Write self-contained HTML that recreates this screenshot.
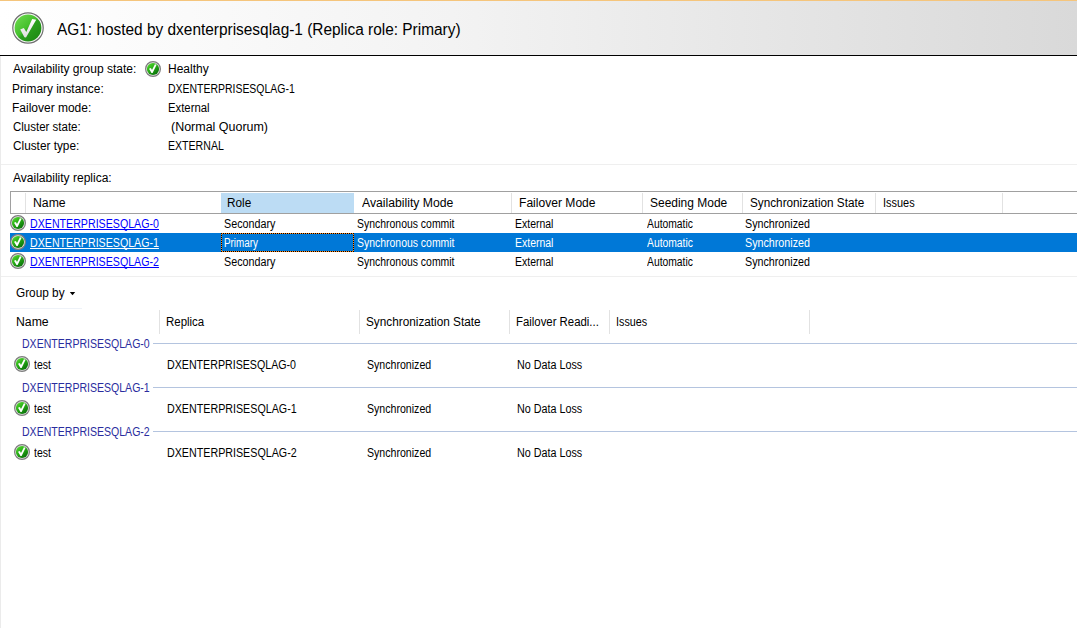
<!DOCTYPE html><html><head><meta charset="utf-8"><style>

html,body{margin:0;padding:0;width:1077px;height:628px;overflow:hidden;background:#fff;}
body{position:relative;font-family:"Liberation Sans",sans-serif;color:#000;}
.a{position:absolute;white-space:nowrap;}
.t{transform-origin:0 0;}
.lnk{color:#0000ff;text-decoration:underline;text-decoration-skip-ink:none;}
.lnk.sel{color:#fff;}
.sel{color:#fff;}
.grp{color:#2a2d9e;}
.b{position:absolute;}
body.measure .b, body.measure svg{display:none;}
body.measure .t{color:#000 !important;text-decoration:none !important;}

</style></head><body>
<div class="b" style="left:0;top:0;width:1077px;height:1px;background:#f5c57c"></div>
<div class="b" style="left:0;top:1px;width:1077px;height:54px;background:linear-gradient(to right,#ffffff 0%,#f3f3f3 42%,#d9d9d9 100%)"></div>
<div class="b" style="left:0;top:55px;width:1077px;height:1px;background:#000"></div>
<div class="b" style="left:0;top:56px;width:1px;height:572px;background:#ebebeb"></div>
<div class="b" style="left:1px;top:164px;width:1076px;height:1px;background:#efefef"></div>
<div class="b" style="left:10px;top:191px;width:1067px;height:1px;background:#a0a0a0"></div>
<div class="b" style="left:10px;top:191px;width:1px;height:22px;background:#a0a0a0"></div>
<div class="b" style="left:10px;top:213px;width:1067px;height:1px;background:#a0a0a0"></div>
<div class="b" style="left:221px;top:193px;width:133px;height:20px;background:#bcdcf4"></div>
<div class="b" style="left:25px;top:193px;width:1px;height:20px;background:#e2e2e2"></div>
<div class="b" style="left:511px;top:193px;width:1px;height:20px;background:#e2e2e2"></div>
<div class="b" style="left:642px;top:193px;width:1px;height:20px;background:#e2e2e2"></div>
<div class="b" style="left:742px;top:193px;width:1px;height:20px;background:#e2e2e2"></div>
<div class="b" style="left:875px;top:193px;width:1px;height:20px;background:#e2e2e2"></div>
<div class="b" style="left:1002px;top:193px;width:1px;height:20px;background:#e2e2e2"></div>
<div class="b" style="left:10px;top:233px;width:1067px;height:19px;background:#0078d7"></div>
<div class="b" style="left:221px;top:233px;width:133px;height:1px;background:repeating-linear-gradient(to right,#000 0 1px,#ff8a1e 1px 2px)"></div>
<div class="b" style="left:221px;top:251px;width:133px;height:1px;background:repeating-linear-gradient(to right,#000 0 1px,#ff8a1e 1px 2px)"></div>
<div class="b" style="left:221px;top:233px;width:1px;height:19px;background:repeating-linear-gradient(to bottom,#000 0 1px,#ff8a1e 1px 2px)"></div>
<div class="b" style="left:353px;top:233px;width:1px;height:19px;background:repeating-linear-gradient(to bottom,#000 0 1px,#ff8a1e 1px 2px)"></div>
<div class="b" style="left:1px;top:276px;width:1076px;height:1px;background:#efefef"></div>
<svg class="b" style="left:69px;top:292px" width="7" height="4" viewBox="0 0 7 4"><path d="M0.8 0 H6.2 L3.5 3.2 Z" fill="#000"/></svg>
<div class="b" style="left:10px;top:308px;width:72px;height:1px;background:#eef2f8"></div>
<div class="b" style="left:159px;top:310px;width:1px;height:24px;background:#e2e2e2"></div>
<div class="b" style="left:359px;top:310px;width:1px;height:24px;background:#e2e2e2"></div>
<div class="b" style="left:509px;top:310px;width:1px;height:24px;background:#e2e2e2"></div>
<div class="b" style="left:609px;top:310px;width:1px;height:24px;background:#e2e2e2"></div>
<div class="b" style="left:809px;top:310px;width:1px;height:24px;background:#e2e2e2"></div>
<div class="b" style="left:153px;top:343px;width:924px;height:1px;background:#b4c4df"></div>
<div class="b" style="left:153px;top:387px;width:924px;height:1px;background:#b4c4df"></div>
<div class="b" style="left:153px;top:431px;width:924px;height:1px;background:#b4c4df"></div>
<svg class="a" style="left:12px;top:12px" width="32" height="32" viewBox="0 0 32 32">
<defs><linearGradient id="gbb" x1="0" y1="0" x2="1" y2="1"><stop offset="0" stop-color="#72de52"/><stop offset="0.46" stop-color="#45c02d"/><stop offset="0.54" stop-color="#2a9f1c"/><stop offset="1" stop-color="#1b8412"/></linearGradient></defs>
<circle cx="16" cy="16" r="15.2" fill="#fafafa" stroke="#6e6e6e" stroke-width="1.2"/>
<circle cx="16" cy="16" r="13.4" fill="url(#gbb)"/>
<defs><linearGradient id="ckb" x1="0" y1="0" x2="0" y2="1"><stop offset="0" stop-color="#ffffff"/><stop offset="1" stop-color="#dedede"/></linearGradient></defs><path d="M8.2 17.6 L11.8 16.0 L14.3 20.0 L20.2 6.9 L24.2 7.7 L14.0 25.4 L12.4 25.2 Z" fill="url(#ckb)"/>
</svg>
<svg class="a" style="left:145px;top:61px" width="16" height="16" viewBox="0 0 16 16">
<defs><linearGradient id="gsh" x1="0.2" y1="0.1" x2="0.8" y2="0.9"><stop offset="0" stop-color="#4cd22a"/><stop offset="0.5" stop-color="#23a514"/><stop offset="1" stop-color="#0b740b"/></linearGradient></defs>
<circle cx="8" cy="8" r="7.4" fill="#e6e6e6" stroke="#7d7d7d" stroke-width="1.2"/>
<circle cx="8" cy="8" r="6.1" fill="url(#gsh)"/>
<path d="M4.0 7.7 L5.9 7.0 L7.0 8.9 L9.9 3.3 L11.6 3.8 L7.6 11.9 L6.5 12.0 Z" fill="#fff"/>
</svg>
<svg class="a" style="left:10px;top:215px" width="16" height="16" viewBox="0 0 16 16">
<defs><linearGradient id="gsr0" x1="0.2" y1="0.1" x2="0.8" y2="0.9"><stop offset="0" stop-color="#4cd22a"/><stop offset="0.5" stop-color="#23a514"/><stop offset="1" stop-color="#0b740b"/></linearGradient></defs>
<circle cx="8" cy="8" r="7.4" fill="#e6e6e6" stroke="#7d7d7d" stroke-width="1.2"/>
<circle cx="8" cy="8" r="6.1" fill="url(#gsr0)"/>
<path d="M4.0 7.7 L5.9 7.0 L7.0 8.9 L9.9 3.3 L11.6 3.8 L7.6 11.9 L6.5 12.0 Z" fill="#fff"/>
</svg>
<svg class="a" style="left:10px;top:234px" width="16" height="16" viewBox="0 0 16 16">
<defs><linearGradient id="gsr1" x1="0.2" y1="0.1" x2="0.8" y2="0.9"><stop offset="0" stop-color="#4cd22a"/><stop offset="0.5" stop-color="#23a514"/><stop offset="1" stop-color="#0b740b"/></linearGradient></defs>
<circle cx="8" cy="8" r="7.4" fill="#e6e6e6" stroke="#7d7d7d" stroke-width="1.2"/>
<circle cx="8" cy="8" r="6.1" fill="url(#gsr1)"/>
<path d="M4.0 7.7 L5.9 7.0 L7.0 8.9 L9.9 3.3 L11.6 3.8 L7.6 11.9 L6.5 12.0 Z" fill="#fff"/>
</svg>
<svg class="a" style="left:10px;top:253px" width="16" height="16" viewBox="0 0 16 16">
<defs><linearGradient id="gsr2" x1="0.2" y1="0.1" x2="0.8" y2="0.9"><stop offset="0" stop-color="#4cd22a"/><stop offset="0.5" stop-color="#23a514"/><stop offset="1" stop-color="#0b740b"/></linearGradient></defs>
<circle cx="8" cy="8" r="7.4" fill="#e6e6e6" stroke="#7d7d7d" stroke-width="1.2"/>
<circle cx="8" cy="8" r="6.1" fill="url(#gsr2)"/>
<path d="M4.0 7.7 L5.9 7.0 L7.0 8.9 L9.9 3.3 L11.6 3.8 L7.6 11.9 L6.5 12.0 Z" fill="#fff"/>
</svg>
<svg class="a" style="left:14px;top:356px" width="16" height="16" viewBox="0 0 16 16">
<defs><linearGradient id="gsg0" x1="0.2" y1="0.1" x2="0.8" y2="0.9"><stop offset="0" stop-color="#4cd22a"/><stop offset="0.5" stop-color="#23a514"/><stop offset="1" stop-color="#0b740b"/></linearGradient></defs>
<circle cx="8" cy="8" r="7.4" fill="#e6e6e6" stroke="#7d7d7d" stroke-width="1.2"/>
<circle cx="8" cy="8" r="6.1" fill="url(#gsg0)"/>
<path d="M4.0 7.7 L5.9 7.0 L7.0 8.9 L9.9 3.3 L11.6 3.8 L7.6 11.9 L6.5 12.0 Z" fill="#fff"/>
</svg>
<svg class="a" style="left:14px;top:400px" width="16" height="16" viewBox="0 0 16 16">
<defs><linearGradient id="gsg1" x1="0.2" y1="0.1" x2="0.8" y2="0.9"><stop offset="0" stop-color="#4cd22a"/><stop offset="0.5" stop-color="#23a514"/><stop offset="1" stop-color="#0b740b"/></linearGradient></defs>
<circle cx="8" cy="8" r="7.4" fill="#e6e6e6" stroke="#7d7d7d" stroke-width="1.2"/>
<circle cx="8" cy="8" r="6.1" fill="url(#gsg1)"/>
<path d="M4.0 7.7 L5.9 7.0 L7.0 8.9 L9.9 3.3 L11.6 3.8 L7.6 11.9 L6.5 12.0 Z" fill="#fff"/>
</svg>
<svg class="a" style="left:14px;top:444px" width="16" height="16" viewBox="0 0 16 16">
<defs><linearGradient id="gsg2" x1="0.2" y1="0.1" x2="0.8" y2="0.9"><stop offset="0" stop-color="#4cd22a"/><stop offset="0.5" stop-color="#23a514"/><stop offset="1" stop-color="#0b740b"/></linearGradient></defs>
<circle cx="8" cy="8" r="7.4" fill="#e6e6e6" stroke="#7d7d7d" stroke-width="1.2"/>
<circle cx="8" cy="8" r="6.1" fill="url(#gsg2)"/>
<path d="M4.0 7.7 L5.9 7.0 L7.0 8.9 L9.9 3.3 L11.6 3.8 L7.6 11.9 L6.5 12.0 Z" fill="#fff"/>
</svg>
<div id="title" class="a t " style="left:56.90px;top:22.00px;font-size:16px;line-height:16px;transform:scaleX(0.9634)">AG1: hosted by dxenterprisesqlag-1 (Replica role: Primary)</div>
<div id="il0" class="a t " style="left:13.10px;top:63.00px;font-size:12px;line-height:12px;transform:scaleX(1.0009)">Availability group state:</div>
<div id="iv0" class="a t " style="left:167.80px;top:63.00px;font-size:12px;line-height:12px;transform:scaleX(1.0008)">Healthy</div>
<div id="il1" class="a t " style="left:11.90px;top:83.00px;font-size:12px;line-height:12px;transform:scaleX(0.9891)">Primary instance:</div>
<div id="iv1" class="a t " style="left:167.80px;top:83.00px;font-size:12px;line-height:12px;transform:scaleX(0.8716)">DXENTERPRISESQLAG-1</div>
<div id="il2" class="a t " style="left:12.18px;top:102.00px;font-size:12px;line-height:12px;transform:scaleX(0.9990)">Failover mode:</div>
<div id="iv2" class="a t " style="left:168.01px;top:102.00px;font-size:12px;line-height:12px;transform:scaleX(0.9439)">External</div>
<div id="il3" class="a t " style="left:12.90px;top:121.00px;font-size:12px;line-height:12px;transform:scaleX(0.9569)">Cluster state:</div>
<div id="iv3" class="a t " style="left:170.66px;top:121.00px;font-size:12px;line-height:12px;transform:scaleX(1.0393)">(Normal Quorum)</div>
<div id="il4" class="a t " style="left:13.18px;top:140.00px;font-size:12px;line-height:12px;transform:scaleX(0.9837)">Cluster type:</div>
<div id="iv4" class="a t " style="left:168.00px;top:140.00px;font-size:12px;line-height:12px;transform:scaleX(0.8813)">EXTERNAL</div>
<div id="avr" class="a t " style="left:13.04px;top:172.00px;font-size:12px;line-height:12px;transform:scaleX(1.0022)">Availability replica:</div>
<div id="gh0" class="a t " style="left:33.03px;top:197.00px;font-size:12px;line-height:12px;transform:scaleX(1.0212)">Name</div>
<div id="gh1" class="a t " style="left:227.00px;top:197.00px;font-size:12px;line-height:12px;transform:scaleX(0.9810)">Role</div>
<div id="gh2" class="a t " style="left:361.96px;top:197.00px;font-size:12px;line-height:12px;transform:scaleX(1.0172)">Availability Mode</div>
<div id="gh3" class="a t " style="left:518.60px;top:197.00px;font-size:12px;line-height:12px;transform:scaleX(1.0069)">Failover Mode</div>
<div id="gh4" class="a t " style="left:649.69px;top:197.00px;font-size:12px;line-height:12px;transform:scaleX(0.9976)">Seeding Mode</div>
<div id="gh5" class="a t " style="left:749.80px;top:197.00px;font-size:12px;line-height:12px;transform:scaleX(0.9786)">Synchronization State</div>
<div id="gh6" class="a t " style="left:882.60px;top:197.00px;font-size:12px;line-height:12px;transform:scaleX(0.9135)">Issues</div>
<div id="gn0" class="a t lnk" style="left:30.00px;top:218.00px;font-size:12px;line-height:12px;transform:scaleX(0.8870)">DXENTERPRISESQLAG-0</div>
<div id="gr0" class="a t " style="left:223.69px;top:218.00px;font-size:12px;line-height:12px;transform:scaleX(0.8951)">Secondary</div>
<div id="ga0" class="a t " style="left:356.69px;top:218.00px;font-size:12px;line-height:12px;transform:scaleX(0.8704)">Synchronous commit</div>
<div id="gf0" class="a t " style="left:514.80px;top:218.00px;font-size:12px;line-height:12px;transform:scaleX(0.8724)">External</div>
<div id="gs0" class="a t " style="left:646.66px;top:218.00px;font-size:12px;line-height:12px;transform:scaleX(0.8612)">Automatic</div>
<div id="gy0" class="a t " style="left:745.26px;top:218.00px;font-size:12px;line-height:12px;transform:scaleX(0.8932)">Synchronized</div>
<div id="gn1" class="a t lnk sel" style="left:30.00px;top:237.00px;font-size:12px;line-height:12px;transform:scaleX(0.8870)">DXENTERPRISESQLAG-1</div>
<div id="gr1" class="a t  sel" style="left:223.76px;top:237.00px;font-size:12px;line-height:12px;transform:scaleX(0.8211)">Primary</div>
<div id="ga1" class="a t  sel" style="left:356.69px;top:237.00px;font-size:12px;line-height:12px;transform:scaleX(0.8704)">Synchronous commit</div>
<div id="gf1" class="a t  sel" style="left:514.80px;top:237.00px;font-size:12px;line-height:12px;transform:scaleX(0.8724)">External</div>
<div id="gs1" class="a t  sel" style="left:646.66px;top:237.00px;font-size:12px;line-height:12px;transform:scaleX(0.8612)">Automatic</div>
<div id="gy1" class="a t  sel" style="left:745.26px;top:237.00px;font-size:12px;line-height:12px;transform:scaleX(0.8932)">Synchronized</div>
<div id="gn2" class="a t lnk" style="left:30.00px;top:256.00px;font-size:12px;line-height:12px;transform:scaleX(0.8870)">DXENTERPRISESQLAG-2</div>
<div id="gr2" class="a t " style="left:223.69px;top:256.00px;font-size:12px;line-height:12px;transform:scaleX(0.8951)">Secondary</div>
<div id="ga2" class="a t " style="left:356.69px;top:256.00px;font-size:12px;line-height:12px;transform:scaleX(0.8704)">Synchronous commit</div>
<div id="gf2" class="a t " style="left:514.80px;top:256.00px;font-size:12px;line-height:12px;transform:scaleX(0.8724)">External</div>
<div id="gs2" class="a t " style="left:646.66px;top:256.00px;font-size:12px;line-height:12px;transform:scaleX(0.8612)">Automatic</div>
<div id="gy2" class="a t " style="left:745.26px;top:256.00px;font-size:12px;line-height:12px;transform:scaleX(0.8932)">Synchronized</div>
<div id="grpby" class="a t " style="left:16.03px;top:287.00px;font-size:12px;line-height:12px;transform:scaleX(0.9843)">Group by</div>
<div id="lh0" class="a t " style="left:15.66px;top:316.00px;font-size:12px;line-height:12px;transform:scaleX(1.0212)">Name</div>
<div id="lh1" class="a t " style="left:165.69px;top:316.00px;font-size:12px;line-height:12px;transform:scaleX(0.9547)">Replica</div>
<div id="lh2" class="a t " style="left:365.74px;top:316.00px;font-size:12px;line-height:12px;transform:scaleX(0.9820)">Synchronization State</div>
<div id="lh3" class="a t " style="left:515.60px;top:316.00px;font-size:12px;line-height:12px;transform:scaleX(0.9479)">Failover Readi...</div>
<div id="lh4" class="a t " style="left:615.80px;top:316.00px;font-size:12px;line-height:12px;transform:scaleX(0.8985)">Issues</div>
<div id="gg0" class="a t grp" style="left:21.80px;top:338.00px;font-size:12px;line-height:12px;transform:scaleX(0.8786)">DXENTERPRISESQLAG-0</div>
<div id="gt0" class="a t " style="left:34.20px;top:359.00px;font-size:12px;line-height:12px;transform:scaleX(0.8752)">test</div>
<div id="gp0" class="a t " style="left:166.96px;top:359.00px;font-size:12px;line-height:12px;transform:scaleX(0.8876)">DXENTERPRISESQLAG-0</div>
<div id="gz0" class="a t " style="left:367.00px;top:359.00px;font-size:12px;line-height:12px;transform:scaleX(0.8824)">Synchronized</div>
<div id="gd0" class="a t " style="left:516.60px;top:359.00px;font-size:12px;line-height:12px;transform:scaleX(0.8960)">No Data Loss</div>
<div id="gg1" class="a t grp" style="left:21.80px;top:382.00px;font-size:12px;line-height:12px;transform:scaleX(0.8786)">DXENTERPRISESQLAG-1</div>
<div id="gt1" class="a t " style="left:34.20px;top:403.00px;font-size:12px;line-height:12px;transform:scaleX(0.8752)">test</div>
<div id="gp1" class="a t " style="left:167.03px;top:403.00px;font-size:12px;line-height:12px;transform:scaleX(0.8918)">DXENTERPRISESQLAG-1</div>
<div id="gz1" class="a t " style="left:367.00px;top:403.00px;font-size:12px;line-height:12px;transform:scaleX(0.8824)">Synchronized</div>
<div id="gd1" class="a t " style="left:516.60px;top:403.00px;font-size:12px;line-height:12px;transform:scaleX(0.8960)">No Data Loss</div>
<div id="gg2" class="a t grp" style="left:21.80px;top:426.00px;font-size:12px;line-height:12px;transform:scaleX(0.8786)">DXENTERPRISESQLAG-2</div>
<div id="gt2" class="a t " style="left:34.20px;top:447.00px;font-size:12px;line-height:12px;transform:scaleX(0.8752)">test</div>
<div id="gp2" class="a t " style="left:167.03px;top:447.00px;font-size:12px;line-height:12px;transform:scaleX(0.8918)">DXENTERPRISESQLAG-2</div>
<div id="gz2" class="a t " style="left:367.00px;top:447.00px;font-size:12px;line-height:12px;transform:scaleX(0.8824)">Synchronized</div>
<div id="gd2" class="a t " style="left:516.60px;top:447.00px;font-size:12px;line-height:12px;transform:scaleX(0.8960)">No Data Loss</div>
</body></html>
